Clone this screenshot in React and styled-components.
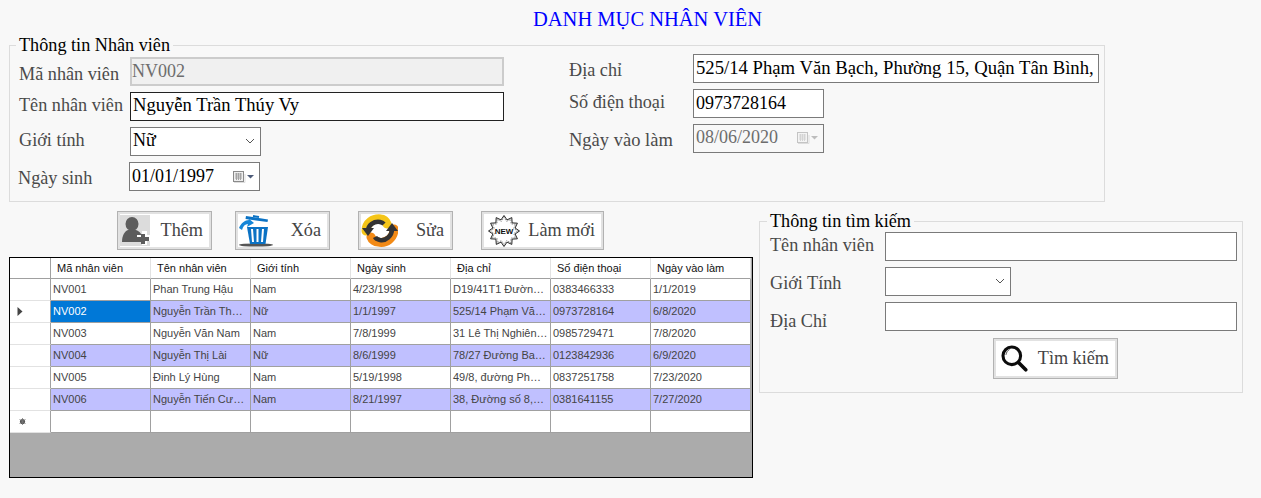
import React from "react";
import styled, { createGlobalStyle } from "styled-components";

const Global = createGlobalStyle`
  html, body { margin: 0; padding: 0; background: #f8f8f8; }
  * { box-sizing: border-box; }
`;

const Page = styled.div`
  width: 1261px;
  height: 498px;
  overflow: hidden;
  padding: 8px 0 0 9px;
  background: #f8f8f8;
  font-family: "Liberation Serif", "Times New Roman", serif;
`;
const Title = styled.h1`
  margin: 0 0 6px 524px;
  height: 22px;
  font-size: 20.5px;
  line-height: 22px;
  font-weight: 400;
  color: #0000ff;
  white-space: nowrap;
`;
const Group = styled.fieldset`
  margin: 0;
  min-width: 0;
  width: ${(p) => p.$width}px;
  height: ${(p) => p.$height}px;
  padding: ${(p) => p.$pad};
  border: 1px solid #dcdcdc;
`;
const Legend = styled.legend`
  margin-left: -3px;
  padding: 0 3px;
  height: 18px;
  font-size: 18.2px;
  line-height: 18px;
  color: #000;
  white-space: nowrap;
`;
const InfoGrid = styled.div`
  display: flex;
  justify-content: space-between;
  align-items: flex-start;
`;
const Column = styled.div`
  display: flex;
  flex-direction: column;
  gap: 6px;
  padding-top: ${(p) => p.$top || 0}px;
`;
const Row = styled.div`
  display: flex;
  align-items: center;
  height: 29px;
`;
const Label = styled.label`
  width: ${(p) => p.$width}px;
  flex: none;
  margin-top: ${(p) => (p.$dy || 0) * 2}px;
  margin-left: ${(p) => p.$dx || 0}px;
  padding-right: ${(p) => -(p.$dx || 0)}px;
  font-size: ${(p) => p.$size || 18.2}px;
  color: #4a4a4a;
  white-space: nowrap;
`;
const Text = styled.input`
  width: ${(p) => p.$width}px;
  height: 29px;
  flex: none;
  padding: 0 2px ${(p) => p.$raise || 0}px;
  border: 1px solid ${(p) => (p.$focus ? "#222" : "#7a7a7a")};
  outline: none;
  border-radius: 0;
  background: #fff;
  font: ${(p) => p.$size || 18}px "Liberation Serif", "Times New Roman", serif;
  color: #000;
  &:disabled {
    background: #f0f0f0;
    border: 2px solid #cccccc;
    padding: 0 0 1px;
    color: #6d6d6d;
  }
`;
const Box = styled.div`
  width: ${(p) => p.$width}px;
  height: 29px;
  flex: none;
  display: flex;
  align-items: center;
  padding: 0 2px ${(p) => (p.$raise === undefined ? 2 : p.$raise)}px 2px;
  border: 1px solid #7a7a7a;
  background: ${(p) => (p.$disabled ? "#f8f8f8" : "#fff")};
  font-size: 18px;
  color: ${(p) => (p.$disabled ? "#6d6d6d" : "#000")};
`;
const BoxText = styled.span`
  flex: 1;
  white-space: nowrap;
`;
const Lower = styled.div`
  display: flex;
  margin-top: 9px;
`;
const LeftColumn = styled.div`
  width: 744px;
  flex: none;
`;
const Toolbar = styled.div`
  display: flex;
  padding-left: 108px;
`;
const Action = styled.button`
  width: ${(p) => p.$width}px;
  height: ${(p) => p.$height || 39}px;
  flex: none;
  margin-left: ${(p) => p.$gap || 0}px;
  padding: 0 8px 0 ${(p) => p.$padLeft || 2}px;
  display: flex;
  align-items: center;
  justify-content: space-between;
  border: 1px solid #b2b2b2;
  box-shadow: inset 0 0 0 2px #e2e2e2;
  background: #fff;
  font: 18.2px "Liberation Serif", "Times New Roman", serif;
  color: #444;
  white-space: nowrap;
`;
const DataGrid = styled.div`
  margin-top: 7px;
  height: 221px;
  border: 1px solid #000;
  background: #ababab;
`;
const Table = styled.div`
  display: grid;
  grid-template-columns: 41px repeat(7, 100px);
  grid-auto-rows: 22px;
  grid-template-rows: 21px;
  width: 741px;
  font-family: "Liberation Sans", Tahoma, Arial, sans-serif;
  font-size: 11px;
`;
const HeadCell = styled.div`
  height: 21px;
  padding: 4px 0 0 6px;
  background: #fff;
  border-right: 1px solid ${(p) => (p.$first ? "#a0a0a0" : "#e2e2e2")};
  border-bottom: 1px solid #a0a0a0;
  color: #111;
  white-space: nowrap;
  overflow: hidden;
`;
const RowHead = styled.div`
  height: 22px;
  display: flex;
  align-items: center;
  padding-left: 6px;
  background: #fff;
  border-right: 1px solid #a0a0a0;
  border-bottom: 1px solid #e2e2e2;
`;
const Cell = styled.div`
  height: 22px;
  padding: 4px 0 0 2px;
  background: ${(p) => (p.$selected ? "#0078d7" : p.$alt ? "#c0c0ff" : "#fff")};
  border-right: 1px solid #a0a0a0;
  border-bottom: 1px solid #a0a0a0;
  color: ${(p) => (p.$selected ? "#fff" : "#444")};
  white-space: nowrap;
  overflow: hidden;
`;
const RightColumn = styled.div`
  margin-left: 6px;
  padding-top: 1px;
`;
const SearchRows = styled(Column)`
  padding-top: 2px;
`;
const SearchAction = styled.div`
  padding: 7px 0 0 223px;
`;
const Svg = styled.svg`
  display: block;
  flex: none;
`;

const AddUserIcon = () => (
  <Svg width="30" height="31" viewBox="0 0 30 31">
    <rect width="30" height="31" fill="#dcdcdc" />
    <ellipse cx="12" cy="9" rx="6.5" ry="7" fill="#5c5c5c" />
    <path d="M2 27c0-7 3-11 6-12h8c3 1 5 3 6 6v6z" fill="#5c5c5c" />
    <path d="M17 20h5v-4h5v4h3v6h-3v4h-5v-4h-5z" fill="#fff" />
    <path d="M21 19h4v3h4v4h-4v3h-4v-3h-4v-4h4z" fill="#5c5c5c" />
  </Svg>
);
const TrashIcon = () => (
  <Svg width="36" height="34" viewBox="0 0 36 34">
    <ellipse cx="18" cy="31" rx="17" ry="1.6" fill="#555" />
    <path d="M8 2l22 3.5-.5 2.5L7.500 5z" fill="#0b72c4" />
    <path d="M15 2l6 1" stroke="#0b72c4" strokeWidth="2" />
    <path d="M9 13h21l-2.500 17H12z" fill="#0b72c4" />
    <path d="M14 15l1 13M19.500 15v13M25 15l-1 13" stroke="#fff" strokeWidth="2" />
    <path d="M1 14C3 9 7 6 11 6l-1-2 6 5-7 4 1-3c-3 0-5 2-6 6z" fill="#1586d8" />
  </Svg>
);
const RefreshIcon = () => (
  <Svg width="37" height="33" viewBox="0 0 37 33">
    <path d="M5 17C5 9 12 4 20 5c2 0 5 2 6 5" fill="none" stroke="#f5c518" strokeWidth="9" strokeLinecap="round" />
    <path d="M33 15c0 9-8 15-16 13-3 0-6-2-7-5" fill="none" stroke="#f28a16" strokeWidth="9" strokeLinecap="round" />
    <path d="M7 17c0-6 6-10 12-9 2 .4 3 1 4 2" fill="none" stroke="#333" strokeWidth="4.500" />
    <path d="M1 14h12l-6 8z" fill="#333" />
    <path d="M31 15c0 7-6 12-12 11-2-.4-4-1-5-3" fill="none" stroke="#333" strokeWidth="4.500" />
    <path d="M25 17l6-8 6 8z" fill="#333" />
  </Svg>
);
const starPoints = (outer, inner) => {
  const pts = [];
  for (let i = 0; i < 24; i++) {
    const r = i % 2 ? inner : outer;
    const a = (i / 24) * Math.PI * 2;
    pts.push(`${(16 + r * Math.cos(a)).toFixed(1)},${(16 + r * Math.sin(a)).toFixed(1)}`);
  }
  return pts.join(" ");
};
const NewIcon = () => (
  <Svg width="32" height="32" viewBox="0 0 32 32">
    <polygon points={starPoints(15.5, 11.5)} fill="#fff" stroke="#222" strokeWidth="1" />
    <polygon points={starPoints(13.5, 10)} fill="#fff" stroke="#555" strokeWidth="0.700" strokeDasharray="1.500 1" />
    <text x="16" y="18.800" textAnchor="middle" fontFamily="Liberation Sans" fontWeight="700" fontSize="8" fill="#111">NEW</text>
  </Svg>
);
const SearchIcon = () => (
  <Svg width="27" height="27" viewBox="0 0 30 30">
    <circle cx="12" cy="12" r="9.800" fill="#fff" stroke="#0c0c0c" strokeWidth="3.400" />
    <path d="M5.500 11c.5-3 2-5 4-6" fill="none" stroke="#444" strokeWidth="1" />
    <path d="M20 20l7.500 7.500" stroke="#0c0c0c" strokeWidth="4" strokeLinecap="round" />
  </Svg>
);
const Chevron = () => (
  <Svg width="10" height="6" viewBox="0 0 10 6" style={{ marginRight: 3 }}>
    <path d="M1 1l4 4 4-4" fill="none" stroke="#555" strokeWidth="1" />
  </Svg>
);
const CalendarIcon = ({ off }) => (
  <Svg width="21" height="14" viewBox="0 0 21 14" style={{ marginRight: 3 }}>
    <rect x="0.500" y="1.500" width="10" height="10" fill={off ? "#f4f4f4" : "#eee"} stroke={off ? "#c4c4c4" : "#8a8a8a"} />
    <path d="M2 4h7M2 6h7M2 8h7M3.500 3v7M5.500 3v7M7.500 3v7" stroke={off ? "#d4d4d4" : "#a4a4a4"} strokeWidth="1" />
    <path d="M1 12.500h11V4" fill="none" stroke="#ddd" />
    <path d="M14 5h7l-3.500 3.500z" fill={off ? "#bdbdbd" : "#4d5b78"} />
  </Svg>
);
const RowArrow = () => (
  <Svg width="6" height="9" viewBox="0 0 6 9" style={{ marginLeft: 1 }}>
    <path d="M0.500 0v9l5-4.500z" fill="#444" />
  </Svg>
);
const NewRowMark = () => (
  <Svg width="7" height="7" viewBox="0 0 7 7" style={{ marginLeft: 3 }}>
    <circle cx="3.500" cy="3.500" r="2.600" fill="#555" />
    <path d="M3.500 0v7M0.500 1.500l6 4M6.500 1.500l-6 4" stroke="#777" strokeWidth="0.800" />
  </Svg>
);

const columns = ["Mã nhân viên", "Tên nhân viên", "Giới tính", "Ngày sinh", "Địa chỉ", "Số điện thoại", "Ngày vào làm"];
const rows = [
  ["NV001", "Phan Trung Hậu", "Nam", "4/23/1998", "D19/41T1 Đườn…", "0383466333", "1/1/2019"],
  ["NV002", "Nguyễn Trần Th…", "Nữ", "1/1/1997", "525/14 Phạm Vă…", "0973728164", "6/8/2020"],
  ["NV003", "Nguyễn Văn Nam", "Nam", "7/8/1999", "31 Lê Thị Nghiên…", "0985729471", "7/8/2020"],
  ["NV004", "Nguyễn Thị Lài", "Nữ", "8/6/1999", "78/27 Đường Ba…", "0123842936", "6/9/2020"],
  ["NV005", "Đinh Lý Hùng", "Nam", "5/19/1998", "49/8, đường Ph…", "0837251758", "7/23/2020"],
  ["NV006", "Nguyễn Tiến Cư…", "Nam", "8/21/1997", "38, Đường số 8,…", "0381641155", "7/27/2020"],
  ["", "", "", "", "", "", ""],
];

export default function App() {
  return (
    <Page>
      <Global />
      <Title>DANH MỤC NHÂN VIÊN</Title>
      <Group $width={1096} $height={166} $pad="0 5px 0 9px">
        <Legend>Thông tin Nhân viên</Legend>
        <InfoGrid>
          <Column $top={3}>
            <Row>
              <Label $width={111} $dy={2.5}>Mã nhân viên</Label>
              <Text $width={374} disabled value="NV002" readOnly />
            </Row>
            <Row>
              <Label $width={111} $dy={-1.5}>Tên nhân viên</Label>
              <Text $width={374} $focus $raise={4} $size={18.6} value="Nguyễn Trần Thúy Vy" readOnly />
            </Row>
            <Row>
              <Label $width={111} $dy={-1}>Giới tính</Label>
              <Box $width={131}><BoxText>Nữ</BoxText><Chevron /></Box>
            </Row>
            <Row>
              <Label $width={111} $dy={1.5} $dx={-1}>Ngày sinh</Label>
              <Box $width={131} $raise={0}><BoxText>01/01/1997</BoxText><CalendarIcon /></Box>
            </Row>
          </Column>
          <Column>
            <Row>
              <Label $width={124} $dy={1.5}>Địa chỉ</Label>
              <Text $width={406} $raise={2} $size={18.7} value="525/14 Phạm Văn Bạch, Phường 15, Quận Tân Bình," readOnly />
            </Row>
            <Row>
              <Label $width={124} $dy={-1}>Số điện thoại</Label>
              <Text $width={131} value="0973728164" readOnly />
            </Row>
            <Row>
              <Label $width={124} $dy={1.5} $size={18.5}>Ngày vào làm</Label>
              <Box $width={131} $disabled><BoxText>08/06/2020</BoxText><CalendarIcon off /></Box>
            </Row>
          </Column>
        </InfoGrid>
      </Group>
      <Lower>
        <LeftColumn>
          <Toolbar>
            <Action $width={95}><AddUserIcon />Thêm</Action>
            <Action $width={95} $gap={23}><TrashIcon />Xóa</Action>
            <Action $width={95} $gap={28}><RefreshIcon />Sửa</Action>
            <Action $width={123} $gap={28} $padLeft={6}><NewIcon />Làm mới</Action>
          </Toolbar>
          <DataGrid>
            <Table>
              <HeadCell $first />
              {columns.map((c) => <HeadCell key={c}>{c}</HeadCell>)}
              {rows.map((r, i) => (
                <React.Fragment key={i}>
                  <RowHead>{i === 1 ? <RowArrow /> : i === 6 ? <NewRowMark /> : null}</RowHead>
                  {r.map((v, j) => (
                    <Cell key={j} $alt={i % 2 === 1 && i < 6} $selected={i === 1 && j === 0}>{v}</Cell>
                  ))}
                </React.Fragment>
              ))}
            </Table>
          </DataGrid>
        </LeftColumn>
        <RightColumn>
          <Group $width={484} $height={181} $pad="0 5px 0 10px">
            <Legend>Thông tin tìm kiếm</Legend>
            <SearchRows>
              <Row>
                <Label $width={115} $dy={-1}>Tên nhân viên</Label>
                <Text $width={352} value="" readOnly />
              </Row>
              <Row>
                <Label $width={115} $dy={1.5}>Giới Tính</Label>
                <Box $width={126}><BoxText /><Chevron /></Box>
              </Row>
              <Row>
                <Label $width={115} $dy={4.5}>Địa Chỉ</Label>
                <Text $width={352} value="" readOnly />
              </Row>
            </SearchRows>
            <SearchAction>
              <Action $width={125} $height={41} $padLeft={7}><SearchIcon />Tìm kiếm</Action>
            </SearchAction>
          </Group>
        </RightColumn>
      </Lower>
    </Page>
  );
}
